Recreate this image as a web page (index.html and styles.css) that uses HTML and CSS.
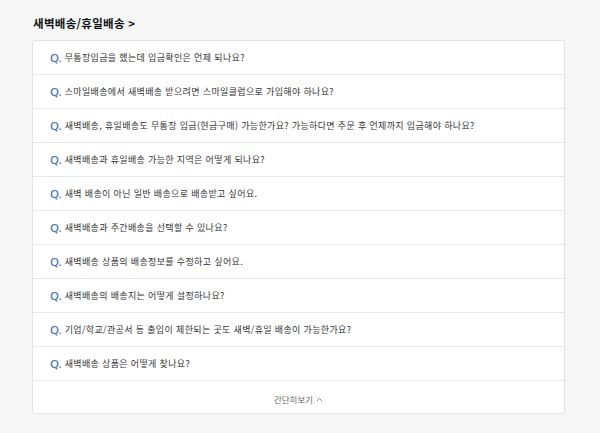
FILE: index.html
```html
<!DOCTYPE html>
<html lang="ko">
<head>
<meta charset="utf-8">
<link rel="stylesheet" href="styles.css">
</head>
<body>
<div class="wrap">
  <h2 class="title">새벽배송/휴일배송 &gt;</h2>
  <div class="card">
    <ul class="faq">
      <li class="row"><span class="q">Q.</span><span class="txt">무통장입금을 했는데 입금확인은 언제 되나요?</span></li>
      <li class="row"><span class="q">Q.</span><span class="txt">스마일배송에서 새벽배송 받으려면 스마일클럽으로 가입해야 하나요?</span></li>
      <li class="row"><span class="q">Q.</span><span class="txt">새벽배송, 휴일배송도 무통장 입금(현금구매) 가능한가요? 가능하다면 주문 후 언제까지 입금해야 하나요?</span></li>
      <li class="row"><span class="q">Q.</span><span class="txt">새벽배송과 휴일배송 가능한 지역은 어떻게 되나요?</span></li>
      <li class="row"><span class="q">Q.</span><span class="txt">새벽 배송이 아닌 일반 배송으로 배송받고 싶어요.</span></li>
      <li class="row"><span class="q">Q.</span><span class="txt">새벽배송과 주간배송을 선택할 수 있나요?</span></li>
      <li class="row"><span class="q">Q.</span><span class="txt">새벽배송 상품의 배송정보를 수정하고 싶어요.</span></li>
      <li class="row"><span class="q">Q.</span><span class="txt">새벽배송의 배송지는 어떻게 설정하나요?</span></li>
      <li class="row"><span class="q">Q.</span><span class="txt">기업/학교/관공서 등 출입이 제한되는 곳도 새벽/휴일 배송이 가능한가요?</span></li>
      <li class="row"><span class="q">Q.</span><span class="txt">새벽배송 상품은 어떻게 찾나요?</span></li>
    </ul>
    <div class="more">간단히보기
      <svg class="caret" width="7" height="5" viewBox="0 0 7 5"><path d="M1 4 L3.5 1.5 L6 4" fill="none" stroke="#888" stroke-width="1"/></svg>
    </div>
  </div>
</div>
</body>
</html>
```

FILE: styles.css
```css
html, body {
  margin: 0;
  padding: 0;
  background: #f6f6f6;
}
body {
  font-family: "Noto Sans CJK KR", "Noto Sans", sans-serif;
  color: #333;
}
.wrap {
  padding: 14px 35px 0 32px;
}
.title {
  margin: 0 0 7px 1px;
  font-size: 11.5px;
  font-weight: 700;
  line-height: 19px;
  color: #111;
  letter-spacing: 0.3px;
}
.card {
  background: #fff;
  border: 1px solid #e3e3e3;
  border-radius: 3px;
  box-sizing: border-box;
  height: 374px;
}
.faq {
  list-style: none;
  margin: 0;
  padding: 0;
}
.row {
  height: 34px;
  box-sizing: border-box;
  border-bottom: 1px solid #e6e6e6;
  display: flex;
  align-items: center;
  padding-left: 17px;
}
.q {
  color: #3f72c0;
  font-family: "Noto Sans", sans-serif;
  font-size: 11.5px;
  font-weight: 500;
  margin-right: 3px;
}
.txt {
  font-size: 9px;
  letter-spacing: 0.35px;
  color: #333;
}
.more {
  height: 33px;
  display: flex;
  align-items: center;
  justify-content: center;
  gap: 3px;
  font-size: 8.5px;
  color: #666;
  padding-top: 1px;
}
.caret {
  margin-top: 1px;
}
```
